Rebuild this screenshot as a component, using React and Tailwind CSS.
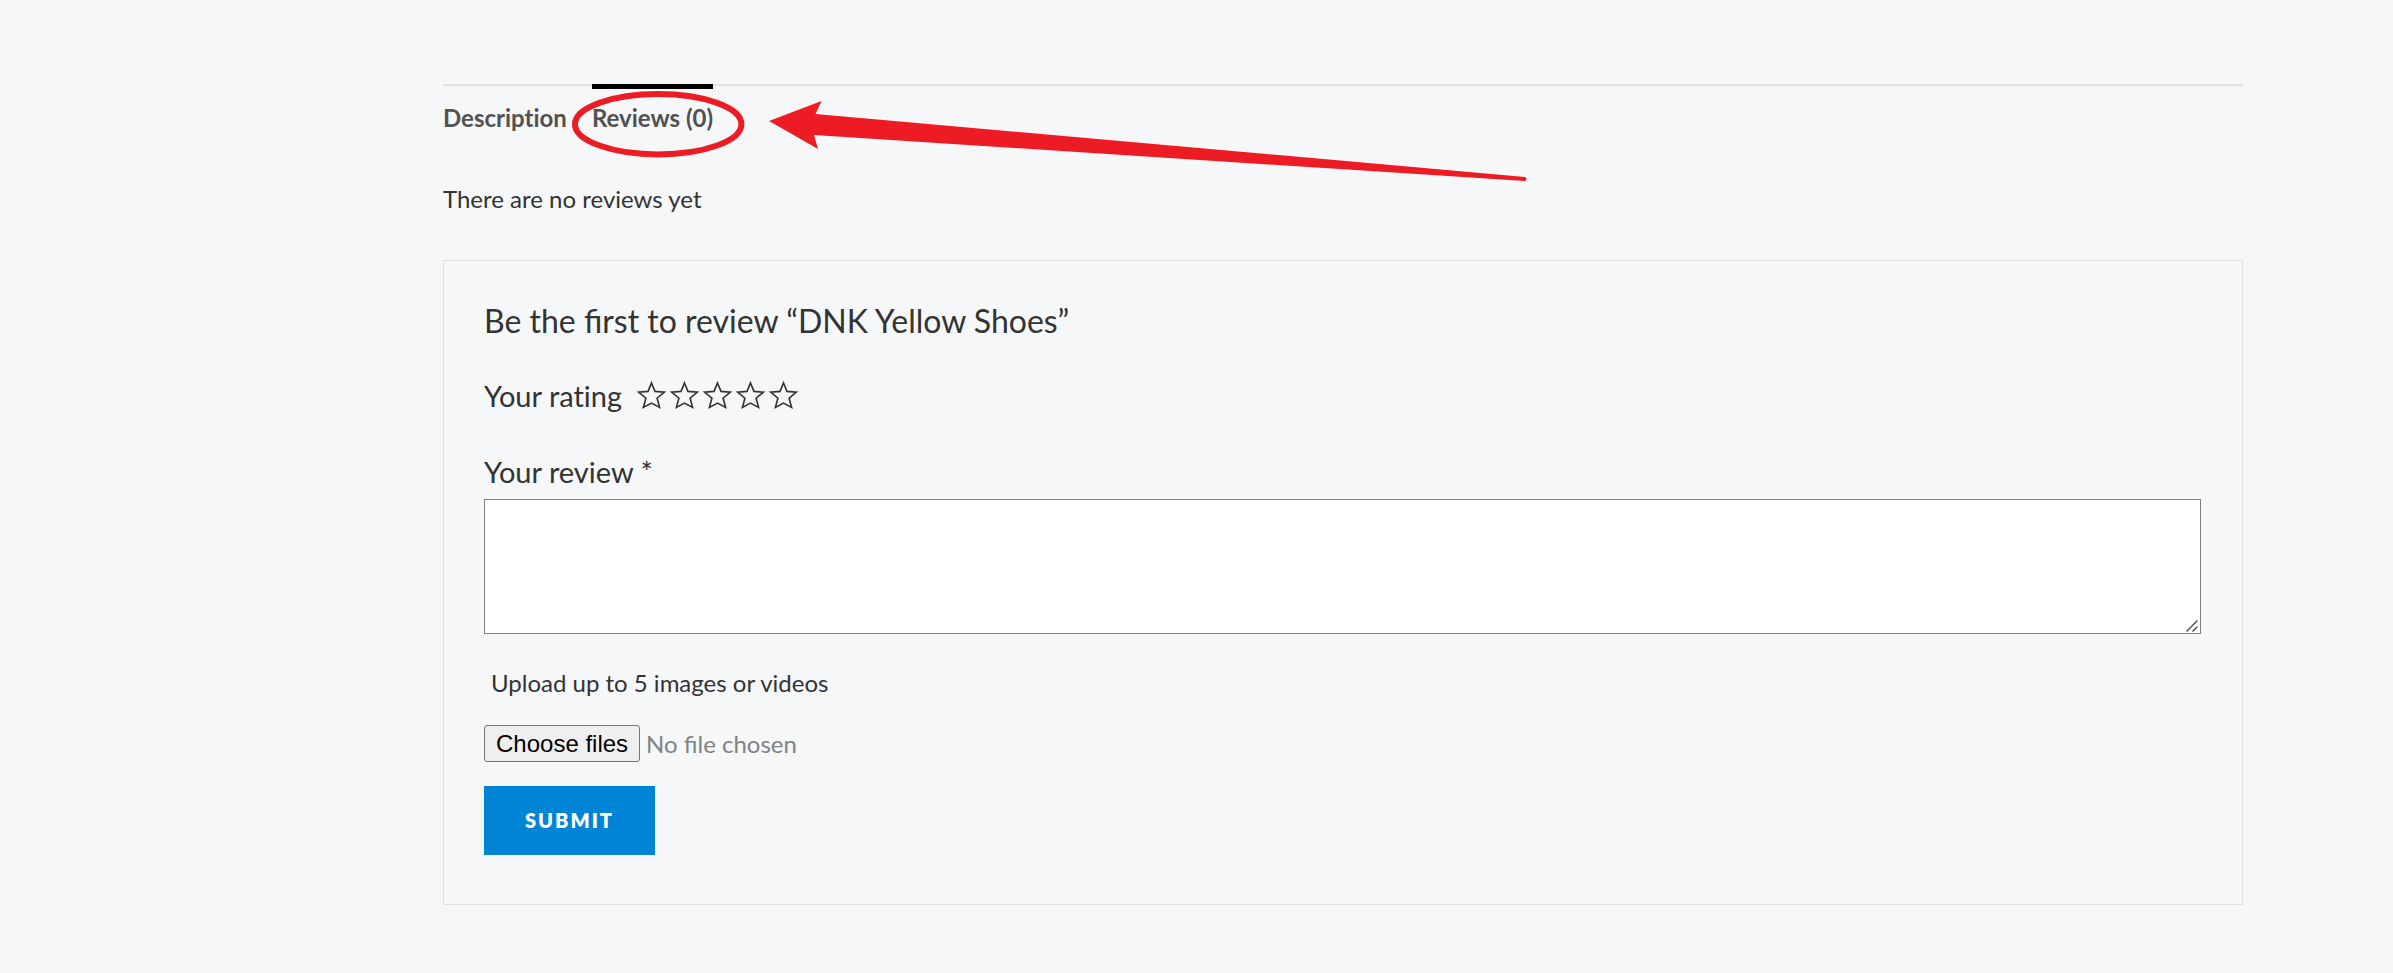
// src/App.jsx
import { useRef, useState } from 'react';

const TABS = [
  { id: 'description', label: 'Description' },
  { id: 'reviews', label: 'Reviews (0)' },
];

export default function App() {
  const [tab, setTab] = useState('reviews');

  return (
    <main className="min-h-screen bg-[#f5f7f9] pt-[84px] pl-[443px] pr-[150px] pb-[68px] font-['Lato',sans-serif] text-2xl text-[#333333]">
      <nav className="relative flex gap-[25px] border-t-2 border-[#e0e1e3] [font-variant-ligatures:none]">
        {TABS.map((t) => (
          <button
            key={t.id}
            onClick={() => setTab(t.id)}
            className={`-mt-0.5 border-t-[5px] pt-[11px] font-bold leading-9 text-[#515151] cursor-pointer ${
              tab === t.id ? 'border-black' : 'border-transparent'
            }`}
          >
            {t.label}
          </button>
        ))}
        <Annotation />
      </nav>

      <p className="mt-[43px] leading-10">There are no reviews yet</p>
      <ReviewForm />
    </main>
  );
}

function ReviewForm() {
  const [rating, setRating] = useState(0);
  const [files, setFiles] = useState([]);
  const fileInput = useRef(null);

  return (
    <form
      onSubmit={(e) => e.preventDefault()}
      className="mt-[41px] border border-[#e0e1e3] pl-10 pr-[41px] pt-9 pb-[49px]"
    >
      <h2 className="text-[32px] leading-12">Be the first to review “DNK Yellow Shoes”</h2>

      {/* Rating */}
      <div className="mt-[27px] flex items-center gap-4">
        <span id="rating-label" className="text-[29px] leading-12 [font-variant-ligatures:none]">
          Your rating
        </span>
        <div role="group" aria-labelledby="rating-label" className="flex gap-1.5">
          {[1, 2, 3, 4, 5].map((n) => (
            <button
              key={n}
              type="button"
              aria-label={`${n} of 5 stars`}
              onClick={() => setRating(n)}
              className="cursor-pointer"
            >
              <Star filled={n <= rating} />
            </button>
          ))}
        </div>
      </div>

      {/* Review text */}
      <label htmlFor="comment" className="mt-7 block text-[29px] leading-12">
        Your review *
      </label>
      <div className="relative mt-[3px]">
        <textarea
          id="comment"
          required
          className="block h-[135px] w-full resize-none border border-[#808080] bg-white p-3"
        />
        <svg
          className="absolute right-[3px] bottom-0.5 h-3 w-3"
          viewBox="0 0 12 12"
          stroke="#555555"
          strokeWidth="1.5"
          aria-hidden="true"
        >
          <path d="M0.5 11.5L11.5 0.5M6.5 11.5L11.5 6.5" />
        </svg>
      </div>

      {/* Upload */}
      <label htmlFor="attachments" className="mt-[31px] block pl-[7px] leading-9">
        Upload up to 5 images or videos
      </label>
      <div className="mt-6 flex items-center gap-1.5">
        <input
          id="attachments"
          ref={fileInput}
          type="file"
          multiple
          accept="image/*,video/*"
          className="hidden"
          onChange={(e) => setFiles([...e.target.files])}
        />
        <button
          type="button"
          onClick={() => fileInput.current.click()}
          className="rounded-[3px] border border-[#767676] bg-[#efefef] px-[11px] font-['Liberation_Sans',sans-serif] leading-[35px] text-black"
        >
          Choose files
        </button>
        <span className="text-[#808285]">
          {files.length > 0 ? `${files.length} files` : 'No file chosen'}
        </span>
      </div>

      <button
        type="submit"
        className="mt-6 bg-[#0084d6] px-[41px] py-5 text-xl font-extrabold leading-[29px] tracking-widest text-white uppercase cursor-pointer"
      >
        Submit
      </button>
    </form>
  );
}

function Star({ filled }) {
  return (
    <svg
      className="h-7 w-[27px] overflow-visible"
      viewBox="0 0 28 28"
      fill={filled ? 'currentColor' : 'none'}
      stroke="currentColor"
      strokeWidth="1.7"
    >
      <path d="M14 0.5L17.6 9.2L27.3 10.1L19.8 16.3L22.4 25.8L14 21.4L5.6 25.8L8.2 16.3L0.7 10.1L10.4 9.2Z" />
    </svg>
  );
}

// Red callout pointing at the reviews tab
function Annotation() {
  return (
    <svg
      className="pointer-events-none absolute -top-0.5 left-0 h-[110px] w-[1100px]"
      viewBox="0 0 1100 110"
      aria-hidden="true"
    >
      <ellipse cx="215.2" cy="40.2" rx="83.2" ry="30.2" fill="none" stroke="#ed1c24" strokeWidth="6" />
      <path
        d="M326 37L378.5 17L372.5 30L1082 93Q1085 95 1082 97L371 51L375 65Z"
        fill="#ed1c24"
      />
    </svg>
  );
}
